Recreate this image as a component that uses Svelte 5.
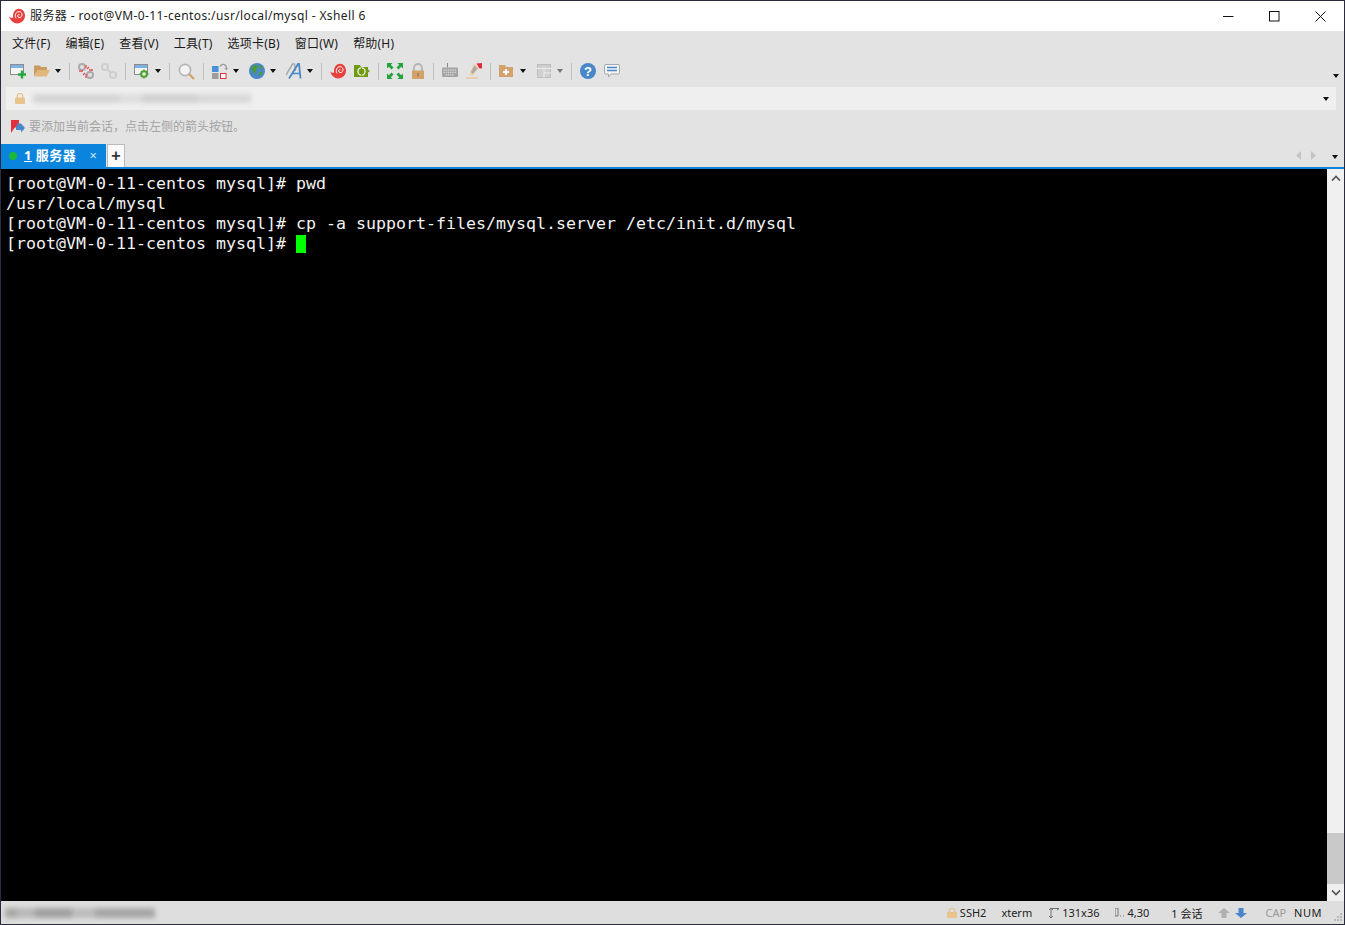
<script>
  const menus = ['文件(F)', '编辑(E)', '查看(V)', '工具(T)', '选项卡(B)', '窗口(W)', '帮助(H)'];
  const lines = [
    '[root@VM-0-11-centos mysql]# pwd',
    '/usr/local/mysql',
    '[root@VM-0-11-centos mysql]# cp -a support-files/mysql.server /etc/init.d/mysql'
  ];
</script>

{#snippet swirl(size)}
  <svg class="swirl" width={size} height={size} viewBox="0 0 16 16">
    <path d="M0 8.2 C1.5 9.8 3 10 4.2 9.6 C3.4 5 6 .8 10 .8 C13.5 .8 16 3.8 16 7.6 C16 12.2 12.5 15.4 8 15.4 C4.6 15.4 1.5 12.6 0 8.2Z" fill="#e8403c"/>
    <path d="M7 10.4 C5.4 8 6.6 3.6 10 3.6 C12.6 3.6 13.8 6.6 12.4 8.6 C11.2 10.2 8.8 9.8 8.6 8 C8.5 6.8 9.6 6.2 10.5 6.8" fill="none" stroke="#fff" stroke-width="1"/>
  </svg>
{/snippet}

{#snippet caret(dim)}
  <svg class="caret" class:dim width="6" height="4" viewBox="0 0 6 4"><path d="M0 0H6L3 4Z"/></svg>
{/snippet}

<div class="win">
  <header class="title">
    {@render swirl(16)}
    <span class="title-text">服务器 - root@VM-0-11-centos:/usr/local/mysql - Xshell 6</span>
    <div class="controls">
      <svg width="11" height="11" viewBox="0 0 11 11"><path d="M0 5.5H10.5" stroke="#111" stroke-width="1"/></svg>
      <svg width="11" height="11" viewBox="0 0 11 11"><rect x=".5" y=".5" width="9.5" height="9.5" fill="none" stroke="#111"/></svg>
      <svg width="11" height="11" viewBox="0 0 11 11"><path d="M.5 .5L10.5 10.5M10.5 .5L.5 10.5" stroke="#111" stroke-width="1"/></svg>
    </div>
  </header>

  <nav class="menu">
    {#each menus as m}<span>{m}</span>{/each}
  </nav>

  <div class="toolbar">
    <div class="grp">
      <svg class="ic" viewBox="0 0 16 16"><rect x=".5" y="1.5" width="13" height="10" fill="#f4f4f4" stroke="#8b8b8b"/><rect x="1" y="2" width="12" height="3" fill="#7fb2e2"/><path d="M12 7.5V15.5M8 11.5H16" stroke="#22a83a" stroke-width="2.4"/></svg>
      <div class="dd">
        <svg class="ic" viewBox="0 0 16 16"><path d="M0 2.5H6L7 4H13V7H4L0 13Z" fill="#c99c62"/><path d="M3.5 7H16L12.5 13.5H0Z" fill="#e3b77c"/></svg>
        {@render caret(false)}
      </div>
    </div>
    <i class="sep"></i>
    <div class="grp g2">
      <svg class="ic" viewBox="0 0 16 16"><g fill="none" stroke="#aaa" stroke-width="2"><circle cx="4" cy="4" r="3"/><circle cx="12" cy="12" r="3"/></g><path d="M8 2V5M1 8H5M11 7H15M8 11V15M11 4L9 6M5 12L7 10" stroke="#e8505a" stroke-width="1.3"/></svg>
      <svg class="ic" viewBox="0 0 16 16"><g fill="none" stroke="#cfcfcf" stroke-width="2.2"><circle cx="4" cy="4" r="3"/><circle cx="12" cy="12" r="3"/><path d="M6 6L10 10"/></g></svg>
    </div>
    <i class="sep"></i>
    <div class="dd">
      <svg class="ic" viewBox="0 0 16 16"><rect x=".5" y="1.5" width="13" height="10" fill="#f4f4f4" stroke="#8b8b8b"/><rect x="1" y="2" width="12" height="3" fill="#7fb2e2"/><circle cx="10" cy="11" r="2.8" fill="#f4f4f4" stroke="#4ea32e" stroke-width="2"/><path d="M10 6.5V8M10 14V15.5M5.5 11H7M13 11H14.5M7 8L8 9M12 13L13 14M13 8L12 9M8 13L7 14" stroke="#4ea32e" stroke-width="1.4"/></svg>
      {@render caret(false)}
    </div>
    <i class="sep"></i>
    <svg class="ic big" viewBox="0 0 17 17"><circle cx="7" cy="7" r="5.6" fill="#f3f3f3" stroke="#b5b5b5" stroke-width="1.6"/><path d="M11 11L16 16" stroke="#d2a26c" stroke-width="2.4"/></svg>
    <i class="sep"></i>
    <div class="grp g5">
      <div class="dd">
        <svg class="ic" viewBox="0 0 16 16"><rect x="0" y="3" width="6.5" height="6" fill="#4a90d9"/><rect x="0" y="10" width="6.5" height="6" fill="#9d9d9d"/><rect x="8.5" y="10.5" width="5.5" height="5" fill="#fff" stroke="#d9333f"/><path d="M8 3.5C10 0 14 1 14.5 5" fill="none" stroke="#9d9d9d" stroke-width="1.3"/><path d="M12.5 5H16L14.5 7.5Z" fill="#9d9d9d"/></svg>
        {@render caret(false)}
      </div>
      <div class="dd">
        <svg class="ic" viewBox="0 0 16 16"><circle cx="8" cy="8" r="8" fill="#4a87c8"/><path d="M3 3.5L7 1.5L9 4L7 6L7.5 9L5 11L3.5 7.5L1.5 6ZM10 2L14 4.5L12.5 6.5L10 5ZM10 9L13.5 8.5L12 13L10 12Z" fill="#4c9a3c"/></svg>
        {@render caret(false)}
      </div>
      <div class="dd">
        <svg class="ic" viewBox="0 0 16 16"><path d="M0 12L6.5 1H8.5L9.5 8" fill="none" stroke="#aaa" stroke-width="1.5"/><path d="M3 15.5C6 11 9 6 12 1H13L14.5 15.5" fill="none" stroke="#4a87c8" stroke-width="1.8"/><path d="M6 10.5H13.5" stroke="#4a87c8" stroke-width="1.5"/></svg>
        {@render caret(false)}
      </div>
    </div>
    <i class="sep"></i>
    <div class="grp">
      {@render swirl(16)}
      <svg class="ic" viewBox="0 0 16 16"><path d="M0 2H6L7 4H14V6.5L16 8L14 9.5V14H0Z" fill="#6f9a12"/><circle cx="7.5" cy="8.5" r="3.6" fill="none" stroke="#fff" stroke-width="1.2"/><path d="M7.5 4.5V12.5" stroke="#6f9a12" stroke-width="1.4"/></svg>
    </div>
    <i class="sep"></i>
    <div class="grp">
      <svg class="ic" viewBox="0 0 16 16"><g fill="#23a33c"><path d="M0 0H5.5L3.8 1.8L6.5 4.5L4.5 6.5L1.8 3.8L0 5.5Z"/><path d="M16 0V5.5L14.2 3.8L11.5 6.5L9.5 4.5L12.2 1.8L10.5 0Z"/><path d="M0 16V10.5L1.8 12.2L4.5 9.5L6.5 11.5L3.8 14.2L5.5 16Z"/><path d="M16 16H10.5L12.2 14.2L9.5 11.5L11.5 9.5L14.2 12.2L16 10.5Z"/></g></svg>
      <svg class="ic narrow" viewBox="0 0 14 16"><path d="M3 8V5A4 4 0 0 1 11 5V8" fill="none" stroke="#b4b4b4" stroke-width="1.8"/><rect x="1" y="7.5" width="12" height="8.5" fill="#d2a26c"/><rect x="6.5" y="10" width="1" height="3.5" fill="#8e6a3e"/></svg>
    </div>
    <i class="sep"></i>
    <div class="grp">
      <svg class="ic" viewBox="0 0 16 16"><path d="M5.5 0V4.5" stroke="#888"/><rect x="0" y="4.5" width="16" height="9.5" rx="1" fill="#a4a4a4"/><path d="M1.5 7H14.5M1.5 9.3H14.5M3.5 11.8H12.5" stroke="#e8e8e8" stroke-width="1" stroke-dasharray="1.4 .8"/></svg>
      <svg class="ic" viewBox="0 0 16 16"><path d="M8 1L13 5L7 12L3.5 12.5L4 9Z" fill="#f0cfa5"/><path d="M10.5 0.5L16 0V5.5L13.2 5.2Z" fill="#e02b35"/><path d="M8.5 2.5L11.5 5.5L7 11L5 9Z" fill="#aaa"/><path d="M0 15H12" stroke="#e8c08c" stroke-width="1.2"/></svg>
    </div>
    <i class="sep"></i>
    <div class="grp g8">
      <div class="dd">
        <svg class="ic" viewBox="0 0 16 16"><path d="M0 2H6L7 4H14V14H0Z" fill="#d2a26c"/><path d="M7 6V12M4 9H10" stroke="#fff" stroke-width="2"/></svg>
        {@render caret(false)}
      </div>
      <div class="dd wide">
        <svg class="ic narrow" viewBox="0 0 14 14"><rect x=".5" y=".5" width="13" height="13" fill="#d0d0d0" stroke="#bdbdbd"/><path d="M0 4.5H14M7 4.5V14M7 9H14" stroke="#eee"/></svg>
        {@render caret(true)}
      </div>
    </div>
    <i class="sep"></i>
    <div class="grp">
      <svg class="ic" viewBox="0 0 16 16"><circle cx="8" cy="8" r="8" fill="#4a87c8"/><text x="8" y="12.5" text-anchor="middle" class="qm">?</text></svg>
      <svg class="ic" viewBox="0 0 16 16"><path d="M2 1.5H14A1.5 1.5 0 0 1 15.5 3V9.5A1.5 1.5 0 0 1 14 11H7L4.5 14V11H2A1.5 1.5 0 0 1 .5 9.5V3A1.5 1.5 0 0 1 2 1.5Z" fill="#f4f4f4" stroke="#a8a8a8"/><path d="M3 4.5H13M3 7.5H13" stroke="#4a87c8" stroke-width="1.6"/></svg>
    </div>
    <span class="tool-end">{@render caret(false)}</span>
  </div>

  <div class="addr">
    <svg width="10" height="11" viewBox="0 0 10 11"><path d="M2.2 5V3.2A2.8 2.8 0 0 1 7.8 3.2V5" fill="none" stroke="#e8c48c" stroke-width="1.3"/><rect y="4.5" width="10" height="6.5" rx="1" fill="#e8c48c"/></svg>
    <span class="blur addr-blur" aria-hidden="true"></span>
    <span class="addr-caret">{@render caret(false)}</span>
  </div>

  <div class="hint">
    <svg width="14" height="14" viewBox="0 0 14 14"><path d="M0 0H8V5L3 8.5L0 13Z" fill="#e2313c"/><path d="M6 3.5L10 3.5L14 8L10 12.5V10H5V6H6Z" fill="#4a87c8"/></svg>
    <span class="hint-text">要添加当前会话，点击左侧的箭头按钮。</span>
  </div>

  <div class="tabs">
    <div class="tab">
      <i class="dot"></i>
      <b><u>1</u> 服务器</b>
      <span class="x">×</span>
    </div>
    <div class="plus">+</div>
    <div class="tab-nav">
      <svg width="5" height="9" viewBox="0 0 5 9"><path d="M5 0V9L0 4.5Z"/></svg>
      <svg width="5" height="9" viewBox="0 0 5 9"><path d="M0 0V9L5 4.5Z"/></svg>
      <span class="tab-caret">{@render caret(false)}</span>
    </div>
  </div>

  <main class="body">
    <div class="term">
      {#each lines as l}<div class="ln">{l}</div>{/each}
      <div class="ln">[root@VM-0-11-centos mysql]# <span class="cur"></span></div>
    </div>
    <aside class="sb">
      <div class="sb-btn"><svg width="10" height="6" viewBox="0 0 10 6"><path d="M1 5.5L5 1.5L9 5.5" fill="none" stroke="#555" stroke-width="1.7"/></svg></div>
      <div class="sb-track"><div class="sb-thumb"></div></div>
      <div class="sb-btn"><svg width="10" height="6" viewBox="0 0 10 6"><path d="M1 .5L5 4.5L9 .5" fill="none" stroke="#555" stroke-width="1.7"/></svg></div>
    </aside>
  </main>

  <footer class="status">
    <span class="blur st-blur" aria-hidden="true"></span>
    <div class="st-right">
      <span class="s s-ssh"><svg width="10" height="10" viewBox="0 0 10 10"><path d="M2.2 4.5V3A2.8 2.8 0 0 1 7.8 3V4.5" fill="none" stroke="#e8c48c" stroke-width="1.3"/><rect y="4" width="10" height="6" rx="1" fill="#e8c48c"/></svg>SSH2</span>
      <span class="s s-xterm">xterm</span>
      <span class="s s-size"><svg width="10" height="10" viewBox="0 0 10 10"><path d="M2 0V10M0 2L2 0L4 2M0 8L2 10L4 8M2 .5H10M8 0L10 .5L8 2" fill="none" stroke="#666" stroke-width=".9"/></svg>131x36</span>
      <span class="s s-pos"><svg width="9" height="10" viewBox="0 0 9 10"><path d="M0 0V8M3 0V8M0 0H3M0 8H3M5 8H6M8 8H9" fill="none" stroke="#777"/></svg>4,30</span>
      <span class="s s-sess">1 会话</span>
      <svg class="s-up" width="12" height="10" viewBox="0 0 12 10"><path d="M6 0L12 5H8.5V10H3.5V5H0Z" fill="#b0b0b0"/></svg>
      <svg class="s-down" width="12" height="10" viewBox="0 0 12 10"><path d="M6 10L12 5H8.5V0H3.5V5H0Z" fill="#4a87c8"/></svg>
      <span class="s s-cap">CAP</span>
      <span class="s s-num">NUM</span>
      <svg class="grip" width="8" height="8" viewBox="0 0 8 8"><path d="M6 0h2v2H6zM3 3h2v2H3zM6 3h2v2H6zM0 6h2v2H0zM3 6h2v2H3zM6 6h2v2H6z" fill="#b8b8b8"/></svg>
    </div>
  </footer>
</div>

<style>
  :global(body) { margin: 0; background: #e3e3e3; }
  .win {
    box-sizing: border-box;
    width: 1345px;
    height: 925px;
    border: 1px solid #2a2b3c;
    display: flex;
    flex-direction: column;
    overflow: hidden;
    font-family: "Noto Sans", "Noto Sans CJK SC", sans-serif;
    font-size: 12px;
    color: #1a1a1a;
    background: #e3e3e3;
  }
  .swirl { display: block; flex: none; }
  .title {
    height: 30px;
    flex: none;
    background: #fff;
    display: flex;
    align-items: center;
    padding-left: 8px;
    gap: 5px;
  }
  .title-text { font-size: 12px; color: #222; letter-spacing: .38px; padding-bottom: 2px; }
  .controls { margin-left: auto; display: flex; gap: 35px; padding-right: 18px; }
  .menu {
    height: 25px;
    flex: none;
    display: flex;
    align-items: center;
    gap: 15px;
    padding: 0 0 2px 11px;
    box-sizing: border-box;
    letter-spacing: .2px;
  }
  .toolbar {
    height: 30px;
    flex: none;
    display: flex;
    align-items: center;
    padding-left: 9px;
  }
  .grp { display: flex; align-items: center; gap: 8px; }
  .g2 { gap: 7px; }
  .g5 { gap: 10px; }
  .g8 { gap: 11px; }
  .dd { display: flex; align-items: center; gap: 5px; }
  .dd.wide { gap: 6px; }
  .ic { width: 16px; height: 16px; flex: none; display: block; }
  .ic.big { width: 17px; height: 17px; }
  .ic.narrow { width: 14px; }
  .sep { width: 1px; height: 17px; background: #bdbdbd; margin: 0 8px; flex: none; }
  .caret { fill: #111; flex: none; display: block; }
  .caret.dim { fill: #777; }
  .qm { font: bold 13px "Liberation Sans", sans-serif; fill: #fff; }
  .tool-end { margin-left: auto; padding: 9px 5px 0 0; }
  .addr {
    height: 23px;
    flex: none;
    margin: 1px 8px 0 5px;
    background: #efefef;
    display: flex;
    align-items: center;
    padding-left: 9px;
  }
  .blur { display: block; filter: blur(2.5px); }
  .addr-blur {
    width: 218px;
    height: 9px;
    margin-left: 8px;
    background: linear-gradient(90deg, #d4d4d4 0 40%, #dedede 40% 50%, #d0d0d0 50% 75%, #d8d8d8 75% 100%);
  }
  .addr-caret { margin-left: auto; padding-right: 7px; }
  .hint {
    height: 33px;
    flex: none;
    display: flex;
    align-items: center;
    padding-left: 10px;
    gap: 4px;
    color: #a4a4a4;
    font-size: 12px;
  }
  .hint-text { padding-bottom: 2px; }
  .tabs {
    height: 23px;
    flex: none;
    display: flex;
    align-items: stretch;
    gap: 1px;
    padding-top: 1px;
  }
  .tab {
    width: 105px;
    background: #0a84dc;
    color: #fff;
    display: flex;
    align-items: center;
    padding: 0 0 0 8px;
    box-sizing: border-box;
    font-size: 13px;
  }
  .dot { width: 8px; height: 8px; border-radius: 50%; background: #19b83c; flex: none; }
  .tab b { margin-left: 7px; font-weight: 700; letter-spacing: .5px; padding-bottom: 2px; }
  .x { margin-left: auto; padding: 0 9px 2px 0; color: #cfe6f8; font-size: 13px; }
  .plus {
    width: 16px;
    background: #fafafa;
    border: 1px solid #bbb;
    border-bottom: 0;
    text-align: center;
    font: bold 16px/21px "Liberation Sans", sans-serif;
    color: #333;
  }
  .tab-nav {
    margin-left: auto;
    display: flex;
    align-items: center;
    gap: 10px;
    fill: #c4c4c4;
    padding-right: 6px;
  }
  .tab-caret { margin-left: 6px; padding-top: 3px; }
  .body {
    flex: 1;
    min-height: 0;
    display: flex;
    border-top: 2px solid #0a84dc;
    background: #000;
  }
  .term {
    flex: 1;
    padding: 5px 0 0 5px;
    color: #f2f2f2;
    font-family: "DejaVu Sans Mono", monospace;
    font-size: 16.61px;
    line-height: 20px;
  }
  .ln { height: 20px; white-space: pre; }
  .cur {
    display: inline-block;
    width: 10px;
    height: 18px;
    background: #00ff00;
    vertical-align: -4px;
  }
  .sb { width: 17px; flex: none; background: #f0f0f0; display: flex; flex-direction: column; }
  .sb-btn { height: 17px; flex: none; display: flex; align-items: center; justify-content: center; }
  .sb-track { flex: 1; display: flex; flex-direction: column; justify-content: flex-end; }
  .sb-thumb { height: 51px; background: #c9c9c9; }
  .status {
    height: 23px;
    flex: none;
    background: #dedede;
    display: flex;
    align-items: center;
    font-size: 11px;
    color: #222;
  }
  .st-blur {
    width: 150px;
    height: 10px;
    margin-left: 4px;
    background: linear-gradient(90deg, #a8a8a8 0 8%, #b8b8b8 8% 20%, #a0a0a0 20% 45%, #bcbcbc 45% 60%, #a6a6a6 60% 100%);
  }
  .st-right { margin-left: auto; display: flex; align-items: center; }
  .s { display: flex; align-items: center; gap: 3px; white-space: nowrap; }
  .s-xterm { margin-left: 15px; }
  .s-size { margin-left: 17px; }
  .s-pos { margin-left: 16px; }
  .s-sess { margin-left: 22px; }
  .s-up { margin-left: 16px; }
  .s-down { margin-left: 5px; }
  .s-cap { margin-left: 18px; color: #9a9a9a; }
  .s-num { margin-left: 8px; letter-spacing: .5px; }
  .grip { margin: 8px 2px 0 12px; }
</style>
